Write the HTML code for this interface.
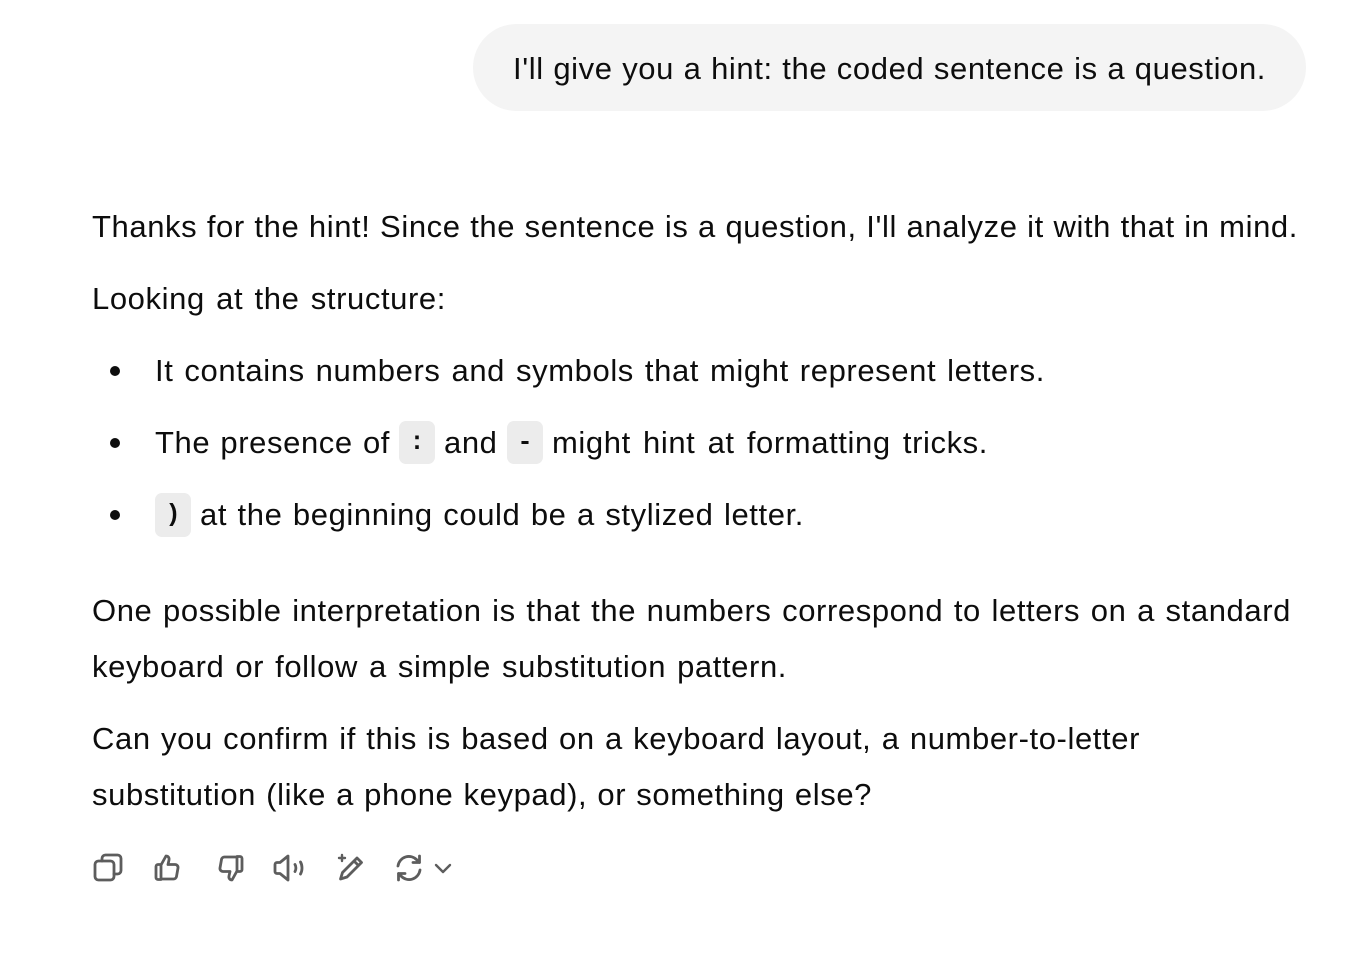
<!DOCTYPE html>
<html><head><meta charset="utf-8"><style>
html,body{margin:0;padding:0;background:#fff;width:1360px;height:954px;overflow:hidden}
body{font-family:"Liberation Sans",sans-serif;color:#0d0d0d;font-size:31px;letter-spacing:0.6px;position:relative}
.l{position:absolute;white-space:nowrap;line-height:40px}
.bub{position:absolute;left:473px;top:24px;width:833px;height:87px;background:#f4f4f4;border-radius:44px}
.chip{position:absolute;background:#ececec;border-radius:7px;font-family:"Liberation Mono",monospace;font-size:25px;letter-spacing:0;text-align:center;line-height:43px;color:#0d0d0d;font-weight:bold}
.dot{position:absolute;width:10px;height:10px;border-radius:50%;background:#0d0d0d}
svg{position:absolute;fill:none;stroke:#5d5d5d;stroke-width:2;stroke-linecap:round;stroke-linejoin:round}
</style></head><body>
<div class="bub"></div>
<div class="l" style="left:513px;top:49px;width:753px;text-align:justify;text-align-last:justify">I'll give you a hint: the coded sentence is a question.</div>

<div class="l" style="left:92px;top:207px;width:1206px;text-align-last:justify">Thanks for the hint! Since the sentence is a question, I'll analyze it with that in mind.</div>
<div class="l" style="left:92px;top:279px;width:354px;text-align-last:justify">Looking at the structure:</div>

<div class="dot" style="left:110px;top:366px"></div>
<div class="l" style="left:155px;top:351px;width:890px;text-align-last:justify">It contains numbers and symbols that might represent letters.</div>

<div class="dot" style="left:110px;top:438px"></div>
<div class="l" style="left:155px;top:423px;width:235px;text-align-last:justify">The presence of</div>
<div class="chip" style="left:399px;top:421px;width:36px;height:43px">:</div>
<div class="l" style="left:444px;top:423px">and</div>
<div class="chip" style="left:507px;top:421px;width:36px;height:43px">-</div>
<div class="l" style="left:552px;top:423px;width:436px;text-align-last:justify">might hint at formatting tricks.</div>

<div class="dot" style="left:110px;top:510px"></div>
<div class="chip" style="left:155px;top:493px;width:36px;height:44px">)</div>
<div class="l" style="left:200px;top:495px;width:604px;text-align-last:justify">at the beginning could be a stylized letter.</div>

<div class="l" style="left:92px;top:591px;width:1199px;text-align-last:justify">One possible interpretation is that the numbers correspond to letters on a standard</div>
<div class="l" style="left:92px;top:647px;width:695px;text-align-last:justify">keyboard or follow a simple substitution pattern.</div>
<div class="l" style="left:92px;top:719px;width:1048px;text-align-last:justify">Can you confirm if this is based on a keyboard layout, a number-to-letter</div>
<div class="l" style="left:92px;top:775px;width:780px;text-align-last:justify">substitution (like a phone keypad), or something else?</div>

<svg style="left:93px;top:852px" width="32" height="32" viewBox="0 0 32 32"><rect x="2" y="9" width="19" height="19" rx="3.5" stroke-width="2.8"/><path d="M9 9V6.5A3.5 3.5 0 0 1 12.5 3h12A3.5 3.5 0 0 1 28 6.5v12a3.5 3.5 0 0 1-3.5 3.5H21" stroke-width="2.8"/></svg>
<svg style="left:153px;top:852px" width="32" height="32" viewBox="0 0 32 32"><path d="M3 14.5a2 2 0 0 1 2-2h3v15H5a2 2 0 0 1-2-2z M8 13l5-9c2 0 3.5 1.6 3 4l-1 4.5h7a3 3 0 0 1 3 3.5l-1.5 8.5a3 3 0 0 1-3 2.5H8" stroke-width="2.8"/></svg>
<svg style="left:213px;top:852px" width="32" height="32" viewBox="0 0 32 32"><path d="M29 17.5a2 2 0 0 1-2 2h-3v-15h3a2 2 0 0 1 2 2z M24 19l-5 9c-2 0-3.5-1.6-3-4l1-4.5h-7a3 3 0 0 1-3-3.5l1.5-8.5a3 3 0 0 1 3-2.5H24" stroke-width="2.8"/></svg>
<svg style="left:272px;top:852px" width="34" height="32" viewBox="0 0 34 32"><path d="M3 12.5v7a2 2 0 0 0 2 2h3l8 6.5V4l-8 6.5H5a2 2 0 0 0-2 2z M23 12.5c1.2 2 1.2 5 0 7 M28.5 10c2 3.5 2 8.5 0 12" stroke-width="2.8"/></svg>
<svg style="left:333px;top:852px" width="34" height="32" viewBox="0 0 34 32"><path d="M9 3v6M6 6h6" stroke-width="2.4"/><path d="M24 6l4.5 4.5L14 25l-6.5 2 2-6.5z M21 9l4.5 4.5" stroke-width="2.8"/></svg>
<svg style="left:393px;top:852px" width="32" height="32" viewBox="0 0 32 32"><path d="M5 14a11 11 0 0 1 19-6l2.5 2.5M26.5 4v6.5H20 M27 18a11 11 0 0 1-19 6l-2.5-2.5M5.5 28v-6.5H12" stroke-width="2.8"/></svg>
<svg style="left:433px;top:858px" width="20" height="20" viewBox="0 0 20 20"><path d="M3 7l7 7 7-7" stroke-width="2.4"/></svg>
</body></html>
